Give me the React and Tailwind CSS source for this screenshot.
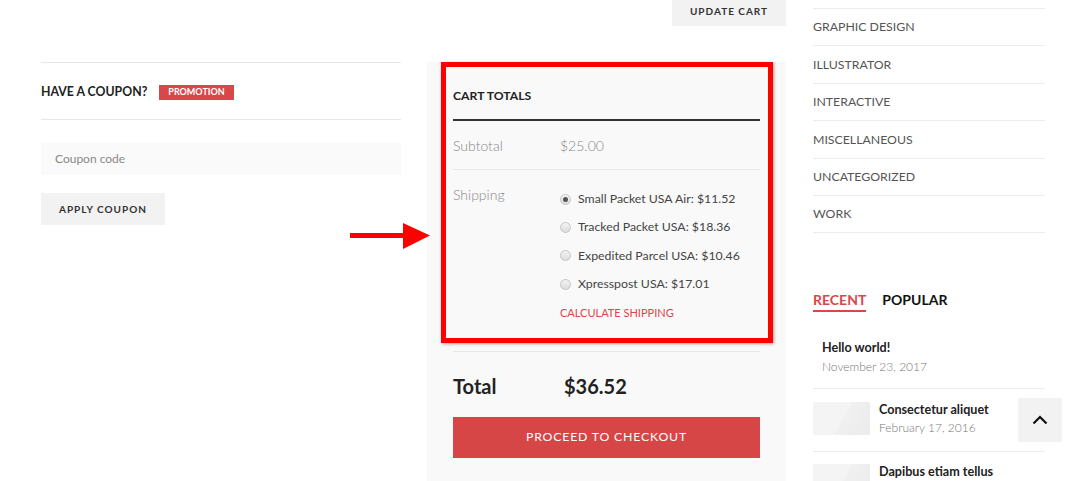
import React from "react";

const cats = ["GRAPHIC DESIGN", "ILLUSTRATOR", "INTERACTIVE", "MISCELLANEOUS", "UNCATEGORIZED", "WORK"];
const ships = [
  { label: "Small Packet USA Air: $11.52", checked: true },
  { label: "Tracked Packet USA: $18.36" },
  { label: "Expedited Parcel USA: $10.46" },
  { label: "Xpresspost USA: $17.01" },
];

function Radio({ checked }) {
  return (
    <span className="relative inline-flex h-[11px] w-[11px] shrink-0 items-center justify-center rounded-full border border-[#c4c4c4] bg-[linear-gradient(180deg,#f4f4f4,#dcdcdc)]">
      {checked && <span className="h-[5px] w-[5px] rounded-full bg-[#555]" />}
    </span>
  );
}

function Thumb() {
  return <div className="h-[33px] w-[57px] shrink-0 bg-[linear-gradient(120deg,#f4f4f4_0%,#f4f4f4_52%,#f0f0f0_52%,#ebebeb_100%)]" />;
}

export default function App() {
  return (
    <div className="relative h-[481px] w-[1088px] overflow-hidden bg-white font-['Lato','Noto_Sans',sans-serif] text-[#333]">
      <div className="flex pl-[41px]">
        <div className="w-[745px]">
          <div className="flex h-[62px] justify-end">
            <div className="flex h-[26px] w-[114px] items-center justify-center bg-[#f2f2f2] pb-[4px] text-[10px] font-bold tracking-[1px] text-[#333]">
              UPDATE CART
            </div>
          </div>
          <div className="flex gap-[26px]">
            {/* left column */}
            <div className="w-[360px]">
              <div className="flex h-[58px] items-center gap-[12px] border-y border-[#e8e8e8] pt-[2px]">
                <span className="text-[12.3px] font-bold text-[#222]">HAVE A COUPON?</span>
                <span className="flex h-[15px] items-center bg-[#d9474b] px-[9px] text-[9px] font-bold text-white">PROMOTION</span>
              </div>
              <div className="mt-[23px] flex h-[32px] items-center bg-[#fafafa] pl-[14px] text-[12px] text-[#888]">
                Coupon code
              </div>
              <div className="mt-[18px] flex h-[32px] w-[124px] items-center justify-center bg-[#f2f2f2] text-[10px] font-bold tracking-[1px] text-[#333]">
                APPLY COUPON
              </div>
            </div>
            {/* cart totals */}
            <div className="h-[440px] w-[359px] bg-[#f9f9f9] px-[26px] pt-[24px]">
              <div className="text-[12.2px] font-bold leading-[20px] text-[#222]">CART TOTALS</div>
              <div className="mt-[13px] h-[2px] bg-[#333]" />
              <div className="flex h-[49px] items-center border-b border-[#e8e8e8] text-[14px] font-light text-[#888]">
                <span className="w-[107px]">Subtotal</span>
                <span>$25.00</span>
              </div>
              <div className="flex border-b border-[#e8e8e8] pb-[28px] pt-[15px]">
                <div className="w-[107px] text-[14px] font-light leading-[20px] text-[#888]">Shipping</div>
                <div>
                  {ships.map((s) => (
                    <div key={s.label} className="flex h-[28.4px] items-center gap-[7px] text-[12.3px] text-[#444]">
                      <Radio checked={s.checked} />
                      <span>{s.label}</span>
                    </div>
                  ))}
                  <div className="mt-[4px] text-[11px] leading-[20px] text-[#d9474b]">CALCULATE SHIPPING</div>
                </div>
              </div>
              <div className="flex h-[65px] items-center pt-[3px] text-[20px] font-bold text-[#222]">
                <span className="w-[111px]">Total</span>
                <span>$36.52</span>
              </div>
              <div className="flex h-[41px] items-center justify-center bg-[#d64646] text-[12.3px] tracking-[0.8px] text-white">
                PROCEED TO CHECKOUT
              </div>
            </div>
          </div>
        </div>
        {/* sidebar */}
        <div className="ml-[27px] w-[232px] pt-[8px]">
          <div className="border-t border-[#ececec]">
            {cats.map((c) => (
              <div key={c} className="flex h-[37.4px] items-center border-b border-[#ececec] pt-[1px] text-[12.3px] text-[#555]">
                {c}
              </div>
            ))}
          </div>
          <div className="mt-[57px] flex gap-[16px] text-[14px] font-bold leading-[20px]">
            <span className="border-b-2 border-[#d9474b] text-[#d9474b]">RECENT</span>
            <span className="text-[#111]">POPULAR</span>
          </div>
          <div className="mt-[26px] border-b border-[#ececec] pb-[12px] pl-[9px] pt-[1px]">
            <div className="text-[12.6px] font-bold leading-[18px] text-[#222]">Hello world!</div>
            <div className="mt-[1px] text-[12px] font-light leading-[18px] text-[#777]">November 23, 2017</div>
          </div>
          <div className="flex gap-[9px] border-b border-[#ececec] pb-[14px] pt-[13px]">
            <Thumb />
            <div className="-mt-[1px]">
              <div className="text-[12.6px] font-bold leading-[18px] text-[#222]">Consectetur aliquet</div>
              <div className="text-[12px] font-light leading-[18px] text-[#777]">February 17, 2016</div>
            </div>
          </div>
          <div className="flex gap-[9px] pt-[12px]">
            <Thumb />
            <div className="-mt-[1px]">
              <div className="text-[12.6px] font-bold leading-[18px] text-[#222]">Dapibus etiam tellus</div>
            </div>
          </div>
        </div>
      </div>

      {/* red annotation box */}
      <div className="pointer-events-none absolute left-[441px] top-[62px] h-[281px] w-[332px] border-[5px] border-[#ff0000] shadow-[1px_1px_3px_rgba(0,0,0,0.35)]" />
      {/* arrow */}
      <svg className="absolute left-[348px] top-[220px]" width="86" height="32" viewBox="348 220 86 32">
        <rect x="350" y="233" width="56" height="5" fill="#ff0000" />
        <polygon points="403,223 430,235.5 403,249" fill="#ff0000" />
      </svg>
      {/* scroll top */}
      <div className="absolute left-[1018px] top-[398px] flex h-[44px] w-[44px] items-center justify-center bg-[#f2f2f2]">
        <svg width="16" height="10" viewBox="0 0 16 10" fill="none">
          <path d="M1.5 8.5 L8 2 L14.5 8.5" stroke="#111" strokeWidth="2.2" />
        </svg>
      </div>
    </div>
  );
}
